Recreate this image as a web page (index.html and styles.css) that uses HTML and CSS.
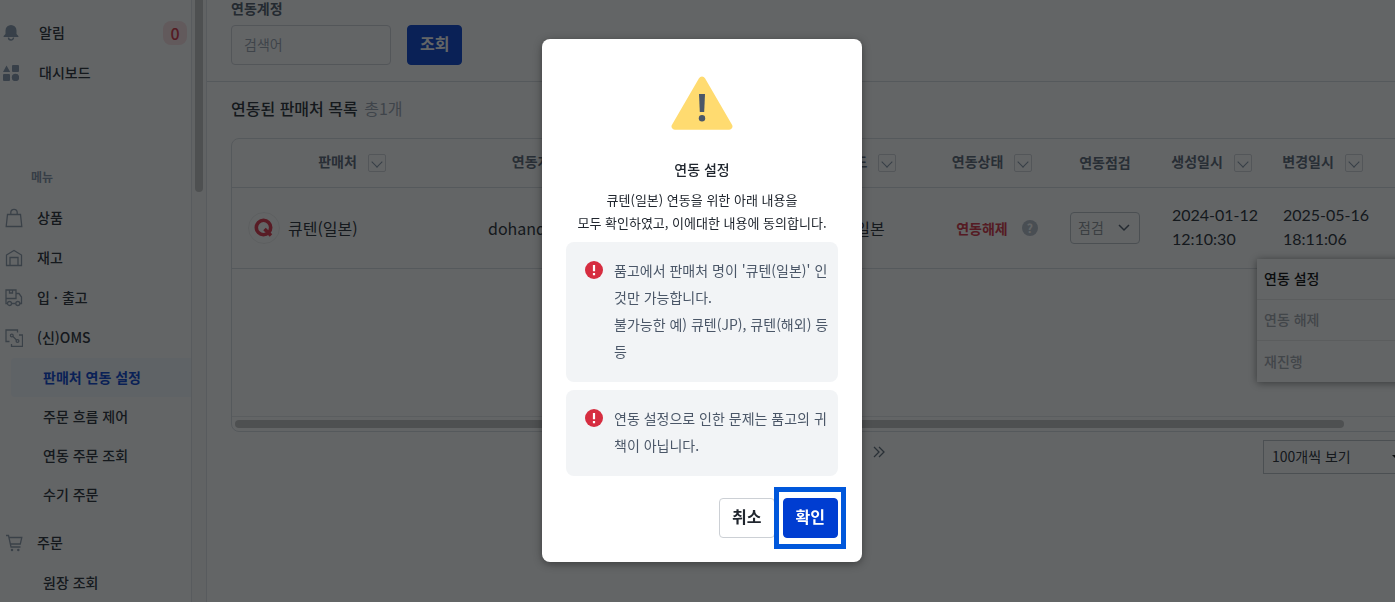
FILE: index.html
```html
<!DOCTYPE html>
<html lang="ko">
<head>
    <meta charset="UTF-8">
    <title>판매처 연동 설정</title>
    <link rel="stylesheet" href="styles.css">
</head>
<body>
    <div class="layout">
        <nav class="sidebar">
            <a class="menu-item top" href="#">
                <svg class="icon" width="16" height="18" viewBox="0 0 16 18" fill="#8496ac"><path d="M8 1a5.500 5.500 0 0 0-5.500 5.500V10L.6 12v1h14.800v-1l-1.900-2V6.500A5.500 5.500 0 0 0 8 1z"/><path d="M5.500 13.500a2.500 2.500 0 0 0 5 0" fill="none" stroke="#8496ac" stroke-width="1.400"/></svg>
                <span>알림</span>
                <span class="count">0</span>
            </a>
            <a class="menu-item top" href="#">
                <svg class="icon" width="16" height="16" viewBox="0 0 16 16" fill="#8496ac"><path d="M3.500.5 7.200 7H0z"/><rect x="9" y="0" width="7" height="7" rx="1"/><rect x="0" y="9" width="7" height="7" rx="1"/><circle cx="12.500" cy="12.500" r="3.700"/></svg>
                <span>대시보드</span>
            </a>
            <p class="menu-title">메뉴</p>
            <a class="menu-item" href="#">
                <svg class="icon" width="18" height="20" viewBox="0 0 18 20"><path d="M2.500 6.500h13l1.300 12H1.200z"/><path d="M5.800 6V4.500a3.200 3.200 0 0 1 6.400 0V6"/></svg>
                <span>상품</span>
            </a>
            <a class="menu-item" href="#">
                <svg class="icon" width="18" height="18" viewBox="0 0 18 18"><path d="M1.500 6 9 1.500 16.500 6v10.500h-15z"/><path d="M5 16.500v-8h8v8"/></svg>
                <span>재고</span>
            </a>
            <a class="menu-item" href="#">
                <svg class="icon" width="18" height="18" viewBox="0 0 18 18"><path d="M2 14.500H1V1h10v8.500H1M4.500 1v3h3V1M11 4.500h3l2.500 3.500v6.500h-1.500M6.500 14.500h4"/><circle cx="4.500" cy="14.500" r="2"/><circle cx="12.800" cy="14.500" r="2"/></svg>
                <span>입 · 출고</span>
            </a>
            <a class="menu-item" href="#">
                <svg class="icon" width="18" height="18" viewBox="0 0 18 18"><path d="M12.500 3.500V1H1v11.500h3.500M14 6h3.500v11.500H6.500V15M8 7.500l3.500 3.500"/><circle cx="6.800" cy="6.500" r="1.400"/><circle cx="12.500" cy="12" r="1.400"/></svg>
                <span>(신)OMS</span>
            </a>
            <div class="submenu">
                <a class="active" href="#">판매처 연동 설정</a>
                <a href="#">주문 흐름 제어</a>
                <a href="#">연동 주문 조회</a>
                <a href="#">수기 주문</a>
            </div>
            <a class="menu-item" href="#">
                <svg class="icon" width="18" height="18" viewBox="0 0 18 18"><path d="M1 1.500h2.500L6 13h9.500M4 3.500h12.800L15.300 10H5.500"/><circle cx="7" cy="16" r=".6"/><circle cx="13.300" cy="16" r=".6"/></svg>
                <span>주문</span>
            </a>
            <div class="submenu">
                <a href="#">원장 조회</a>
            </div>
        </nav>
        <div class="scroll-track"><div class="scroll-thumb"></div></div>

        <main class="main">
            <form class="search">
                <label for="account">연동계정</label>
                <div class="search-row">
                    <input type="text" id="account" placeholder="검색어">
                    <button type="button" class="btn primary">조회</button>
                </div>
            </form>

            <section class="list">
                <h2>연동된 판매처 목록 <span>총1개</span></h2>
                <div class="table-box">
                    <table>
                        <colgroup>
                            <col class="col-shop"><col class="col-account"><col class="col-name"><col class="col-country"><col class="col-status"><col class="col-check"><col class="col-date"><col class="col-date"><col>
                        </colgroup>
                        <thead>
                            <tr>
                                <th>판매처 <button type="button" class="sort" aria-label="정렬"></button></th>
                                <th>연동계정 <button type="button" class="sort" aria-label="정렬"></button></th>
                                <th></th>
                                <th>국가코드 <button type="button" class="sort" aria-label="정렬"></button></th>
                                <th>연동상태 <button type="button" class="sort" aria-label="정렬"></button></th>
                                <th>연동점검</th>
                                <th>생성일시 <button type="button" class="sort" aria-label="정렬"></button></th>
                                <th>변경일시 <button type="button" class="sort" aria-label="정렬"></button></th>
                                <th></th>
                            </tr>
                        </thead>
                        <tbody>
                            <tr>
                                <td>
                                    <div class="cell">
                                        <span class="shop-logo"><svg width="20" height="20" viewBox="0 0 20 20"><circle cx="9.500" cy="9.500" r="7.200" fill="none" stroke="#e02f45" stroke-width="3.600"/><path d="m10.500 11 6.500 6.500" stroke="#e02f45" stroke-width="3.600"/></svg></span>
                                        <span>큐텐(일본)</span>
                                    </div>
                                </td>
                                <td>dohands</td>
                                <td></td>
                                <td><div class="cell center"><span class="flag"></span>일본</div></td>
                                <td><div class="cell center status"><span>연동해제</span><span class="help">?</span></div></td>
                                <td>
                                    <select class="check" aria-label="연동점검"><option>점검</option></select>
                                </td>
                                <td class="date">2024-01-12<br>12:10:30</td>
                                <td class="date">2025-05-16<br>18:11:06</td>
                                <td></td>
                            </tr>
                        </tbody>
                    </table>
                    <div class="row-menu">
                        <button type="button">연동 설정</button>
                        <button type="button" disabled>연동 해제</button>
                        <button type="button" disabled>재진행</button>
                    </div>
                    <div class="table-scroll"><div></div></div>
                </div>
                <div class="pager">
                    <div class="pages">
                        <button type="button" aria-label="처음"><svg width="12" height="12" viewBox="0 0 12 12"><path d="M6 1 1 6l5 5M11 1 6 6l5 5"/></svg></button>
                        <button type="button" aria-label="이전"><svg width="12" height="12" viewBox="0 0 12 12"><path d="M8 1 3 6l5 5"/></svg></button>
                        <button type="button" aria-label="다음"><svg width="12" height="12" viewBox="0 0 12 12"><path d="m4 1 5 5-5 5"/></svg></button>
                        <button type="button" aria-label="마지막"><svg width="12" height="12" viewBox="0 0 12 12"><path d="m1 1 5 5-5 5M6 1l5 5-5 5"/></svg></button>
                    </div>
                    <select class="page-size" aria-label="페이지 크기"><option>100개씩 보기</option></select>
                </div>
            </section>
        </main>
    </div>

    <div class="backdrop">
        <div class="modal" role="dialog" aria-labelledby="modal-title">
            <svg class="warning" width="62" height="54" viewBox="0 0 62 54">
                <path d="M28 2.200a3.500 3.500 0 0 1 6 0l27 46.500a3.300 3.300 0 0 1-2.900 5H3.900A3.300 3.300 0 0 1 1 48.700z" fill="#ffdb70"/>
                <path d="M28 18h6l-.8 18h-4.400z" fill="#4b5768"/>
                <circle cx="31" cy="42.300" r="3.200" fill="#4b5768"/>
            </svg>
            <h3 id="modal-title">연동 설정</h3>
            <p class="desc">큐텐(일본) 연동을 위한 아래 내용을<br>모두 확인하였고, 이에대한 내용에 동의합니다.</p>
            <div class="notice">
                <svg width="18" height="18" viewBox="0 0 18 18"><circle cx="9" cy="9" r="9" fill="#d62d40"/><path d="M9 4v6.300M9 12v2.200" stroke="#fff" stroke-width="2.200"/></svg>
                <p>품고에서 판매처 명이 '큐텐(일본)' 인 것만 가능합니다.<br>불가능한 예) 큐텐(JP), 큐텐(해외) 등등</p>
            </div>
            <div class="notice">
                <svg width="18" height="18" viewBox="0 0 18 18"><circle cx="9" cy="9" r="9" fill="#d62d40"/><path d="M9 4v6.300M9 12v2.200" stroke="#fff" stroke-width="2.200"/></svg>
                <p>연동 설정으로 인한 문제는 품고의 귀책이 아닙니다.</p>
            </div>
            <div class="modal-buttons">
                <button type="button" class="btn">취소</button>
                <div class="highlight"><button type="button" class="btn primary">확인</button></div>
            </div>
        </div>
    </div>
</body>
</html>
```

FILE: styles.css
```css
* {
    box-sizing: border-box;
}
body {
    margin: 0;
    font-family: "Noto Sans CJK KR", sans-serif;
    font-size: 14px;
    color: #20262e;
    background: white;
    overflow: hidden;
}
h2, h3, p {
    margin: 0;
}
button, input, select {
    font: inherit;
    color: inherit;
}
a {
    color: inherit;
    text-decoration: none;
}
.layout {
    display: flex;
    height: 100vh;
    overflow: hidden;
}

/* sidebar */
.sidebar {
    flex: none;
    width: 192px;
    padding-top: 13px;
    border-right: 1px solid #dfe3e8;
    font-weight: 500;
}
.menu-item {
    display: flex;
    align-items: center;
    height: 40px;
    padding: 0 4px 0 5px;
}
.menu-item.top {
    padding-left: 3px;
}
.menu-item span {
    padding-bottom: 2px;
}
.icon {
    flex: none;
    margin-right: 14px;
}
.menu-item:not(.top) .icon {
    fill: none;
    stroke: #8b98a9;
    stroke-width: 1.3;
}
.top .icon {
    margin-right: 20px;
}
.menu-item .count {
    width: 24px;
    height: 24px;
    margin-left: auto;
    border-radius: 8px;
    background: #fbdfe2;
    color: #d62d40;
    font-size: 16px;
    line-height: 24px;
    text-align: center;
}
.menu-title {
    margin: 74px 0 11px 31px;
    color: #8090a5;
    font-size: 12px;
    font-weight: 700;
    line-height: 20px;
}
.submenu {
    margin-bottom: 9px;
}
.submenu a {
    display: block;
    margin-left: 11px;
    padding-left: 32px;
    line-height: 39px;
}
.submenu a.active {
    border-radius: 4px 0 0 4px;
    background: #f3f8ff;
    color: #003dd1;
    font-weight: 700;
}
.scroll-track {
    flex: none;
    width: 15px;
    padding-left: 3px;
    background: #fafafa;
    border-right: 1px solid #dfe3e8;
}
.scroll-thumb {
    width: 8px;
    height: 192px;
    border-radius: 0 0 4px 4px;
    background: #c2c2c2;
}

/* main */
.main {
    flex: 1;
    min-width: 0;
}
.search {
    height: 82px;
    padding-left: 24px;
    border-bottom: 1px solid #d8dce1;
}
.search label {
    display: block;
    padding-bottom: 9px;
    color: #4b5768;
    font-weight: 700;
    line-height: 16px;
}
.search-row {
    display: flex;
    gap: 16px;
}
.search input {
    width: 160px;
    height: 40px;
    padding: 0 12px 2px;
    border: 1px solid #d0d4da;
    border-radius: 4px;
    background: white;
}
.search input::placeholder {
    color: #98a2b0;
}
.btn {
    height: 40px;
    padding: 0 12px 4px;
    border: 1px solid #ccd0d5;
    border-radius: 4px;
    background: white;
    font-size: 16px;
    font-weight: 700;
}
.btn.primary {
    border-color: #003dd1;
    background: #003dd1;
    color: white;
}
.list {
    margin-right: -24px;
    padding-left: 24px;
}
.list h2 {
    padding: 14px 0 18px;
    font-size: 16px;
    font-weight: 500;
    line-height: 24px;
}
.list h2 span {
    margin-left: 2px;
    color: #98a2b0;
    font-weight: 400;
}
.table-box {
    position: relative;
    height: 294px;
    border: 1px solid #d8dce1;
    border-radius: 8px;
    display: flex;
    flex-direction: column;
}
table {
    width: 100%;
    table-layout: fixed;
    border-collapse: collapse;
}
.col-shop {
    width: 240px;
}
.col-account {
    width: 160px;
}
.col-name {
    width: 150px;
}
.col-country {
    width: 148px;
}
.col-status {
    width: 124px;
}
.col-check {
    width: 102px;
}
.col-date {
    width: 111px;
}
th {
    height: 48px;
    padding: 0 0 2px;
    border-bottom: 1px solid #d8dce1;
    color: #566273;
    font-weight: 700;
    white-space: nowrap;
}
td {
    height: 81px;
    padding: 0 0 0 16px;
    border-bottom: 1px solid #d8dce1;
    font-size: 16px;
    line-height: 24px;
}
.date {
    padding-bottom: 2px;
    font-family: Lato, sans-serif;
}
.sort {
    width: 18px;
    height: 18px;
    margin-left: 7px;
    padding: 0;
    border: 1px solid #d0d4da;
    border-radius: 2px;
    background: none;
    vertical-align: middle;
}
.sort::before {
    content: "";
    display: block;
    width: 7px;
    height: 7px;
    margin: -3px auto 0;
    border: solid #8090a5;
    border-width: 0 1px 1px 0;
    transform: rotate(45deg);
}
.cell {
    display: flex;
    align-items: center;
    gap: 8px;
}
.cell.center {
    justify-content: center;
    margin-left: -16px;
}
.shop-logo {
    display: flex;
    align-items: center;
    justify-content: center;
    width: 32px;
    height: 32px;
    border: 1px solid #ededed;
    border-radius: 50%;
}
.flag {
    width: 20px;
    height: 20px;
    border-radius: 50%;
    background: radial-gradient(#d62d40 5px, #eee 6px);
}
.cell.status {
    gap: 14px;
    padding-left: 10px;
    color: #d62d40;
    font-size: 14px;
    font-weight: 700;
}
.help {
    width: 16px;
    height: 16px;
    border-radius: 50%;
    background: #b4bdc9;
    color: white;
    font-size: 12px;
    line-height: 16px;
    text-align: center;
}
.check {
    display: block;
    width: 70px;
    height: 32px;
    padding: 0 7px 2px;
    border: 1px solid #b9bfc7;
    border-radius: 4px;
    appearance: none;
    background: url("data:image/svg+xml,%3Csvg xmlns='http://www.w3.org/2000/svg' width='12' height='8' fill='none' stroke='%234b5768' stroke-width='1.500'%3E%3Cpath d='m1 1 5 5 5-5'/%3E%3C/svg%3E") no-repeat right 9px center;
    color: #8a8f96;
    font-size: 14px;
}
.row-menu {
    position: absolute;
    top: 120px;
    right: 0;
    width: 161px;
    background: white;
    box-shadow: 0 1px 8px rgba(0,0,0,0.5);
}
.row-menu button {
    display: block;
    width: 100%;
    height: 41px;
    padding: 0 7px 2px;
    border: none;
    border-bottom: 1px solid #e8e8e8;
    background: none;
    color: black;
    font-weight: 500;
    text-align: left;
}
.row-menu button:disabled {
    color: #a0a5ad;
}
.row-menu button:last-child {
    border-bottom: none;
}
.table-scroll {
    margin-top: auto;
    padding: 3px;
    border-top: 1px solid #e5e7ea;
}
.table-scroll div {
    width: 94%;
    height: 8px;
    border-radius: 4px;
    background: #c2c2c2;
}
.pager {
    position: relative;
    display: flex;
    justify-content: center;
    padding-top: 8px;
}
.pages {
    display: flex;
    align-items: center;
    gap: 24px;
    height: 24px;
}
.pages button {
    width: 12px;
    padding: 0;
    border: none;
    background: none;
    line-height: 12px;
}
.pages svg {
    fill: none;
    stroke: #5b6877;
    stroke-width: 1.3;
}
.page-size {
    position: absolute;
    top: 8px;
    right: 0;
    width: 156px;
    height: 34px;
    padding: 0 8px 2px;
    border: 1px solid #b9bfc7;
    appearance: none;
    background: url("data:image/svg+xml,%3Csvg xmlns='http://www.w3.org/2000/svg' width='8' height='4'%3E%3Cpath d='M0 0h8L4 4z'/%3E%3C/svg%3E") no-repeat right 18px center;
}

/* modal */
.backdrop {
    position: fixed;
    inset: 0;
    display: flex;
    align-items: center;
    justify-content: center;
    padding: 0 0 2px 9px;
    background: rgba(16,18,20,0.65);
}
.modal {
    width: 320px;
    padding: 37px 24px 24px;
    border-radius: 8px;
    background: white;
    box-shadow: 0 2px 8px rgba(0,0,0,0.4);
    text-align: center;
}
.warning {
    display: block;
    margin: 0 auto 27px;
}
.modal h3 {
    font-size: 14px;
    font-weight: 500;
    line-height: 24px;
}
.desc {
    margin: 7px 0 8px;
    font-size: 13px;
    line-height: 23px;
}
.notice {
    display: flex;
    gap: 11px;
    margin-bottom: 8px;
    padding: 15px 8px 17px 19px;
    border-radius: 8px;
    background: #f2f4f6;
    color: #4b5768;
    line-height: 27px;
    text-align: left;
}
.notice svg {
    flex: none;
    margin-top: 4px;
}
.modal-buttons {
    display: flex;
    justify-content: flex-end;
    gap: 8px;
    padding-top: 14px;
}
.highlight {
    position: relative;
}
.highlight::after {
    content: "";
    position: absolute;
    inset: -11px -8px -11px -9px;
    border: 5px solid #0057db;
    pointer-events: none;
}
```
